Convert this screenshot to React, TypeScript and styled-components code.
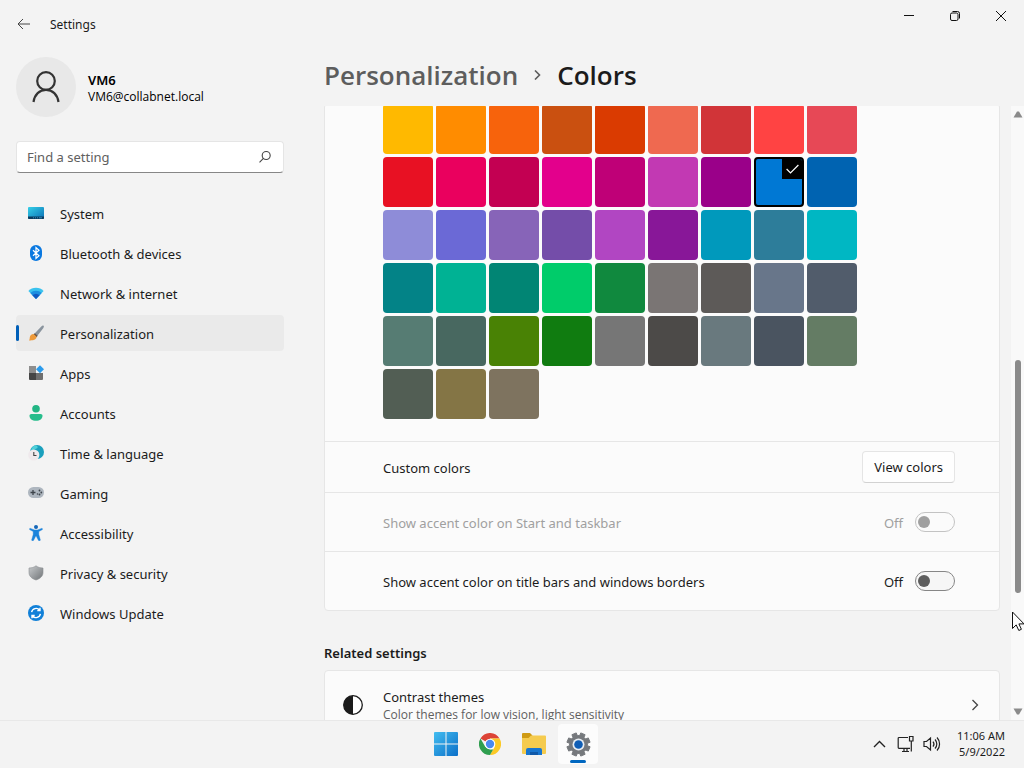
import React, { useState } from "react";
import styled, { createGlobalStyle, css } from "styled-components";

const GlobalStyle = createGlobalStyle`
  * { box-sizing: border-box; }
  body {
    margin: 0;
    background: #f3f3f3;
    color: #1b1b1b;
    font-family: "Noto Sans", "Open Sans", sans-serif;
    font-size: 13px;
    line-height: 20px;
  }
  button, input { font: inherit; color: inherit; }
`;

const Desktop = styled.div`
  display: flex;
  flex-direction: column;
  height: 100vh;
  overflow: hidden;
`;

const Window = styled.div`
  position: relative;
  display: flex;
  flex-direction: column;
  flex: 1;
  min-height: 0;
`;

const TitleBar = styled.header`
  display: flex;
  justify-content: space-between;
  align-items: flex-start;
  height: 48px;
  padding-left: 8px;
`;

const TitleGroup = styled.div`
  display: flex;
  align-items: center;
  gap: 10px;
  height: 48px;
`;

const IconButton = styled.button<{ $width: number }>`
  display: grid;
  place-items: center;
  width: ${(p) => p.$width}px;
  height: 32px;
  padding: 0;
  border: 0;
  background: transparent;
`;

const WindowTitle = styled.span`
  padding-top: 2px;
  font-size: 12px;
`;

const Controls = styled.div`
  display: flex;
`;

const Body = styled.div`
  display: flex;
  flex: 1;
  min-height: 0;
`;

const Sidebar = styled.aside`
  flex: none;
  width: 300px;
  padding: 9px 16px 0;
`;

const Account = styled.div`
  display: flex;
  align-items: center;
  gap: 12px;
`;

const Avatar = styled.div`
  display: grid;
  place-items: center;
  width: 60px;
  height: 60px;
  border-radius: 50%;
  background: #e8e8e8;
`;

const AccountName = styled.div`
  padding-top: 2px;
  font-weight: 600;
  line-height: 18px;
  color: #000;
`;

const AccountMail = styled.div`
  font-family: "Open Sans", "Noto Sans", sans-serif;
  font-size: 12px;
  line-height: 16px;
  color: #000;
`;

const SearchBox = styled.label`
  display: flex;
  align-items: center;
  width: 268px;
  height: 32px;
  margin: 24px 0 22px;
  padding: 0 11px 0 10px;
  border: 1px solid #e5e5e5;
  border-bottom-color: #868686;
  border-radius: 4px;
  background: #fff;
`;

const SearchInput = styled.input`
  flex: 1;
  min-width: 0;
  padding: 0;
  border: 0;
  outline: 0;
  background: transparent;
  &::placeholder { color: #606060; opacity: 1; }
`;

const Nav = styled.nav`
  display: flex;
  flex-direction: column;
  gap: 4px;
`;

const NavLink = styled.a<{ $active: boolean }>`
  position: relative;
  display: flex;
  align-items: center;
  gap: 16px;
  height: 36px;
  width: 268px;
  padding-left: 12px;
  border-radius: 4px;
  color: #1b1b1b;
  text-decoration: none;
  ${(p) =>
    p.$active &&
    css`
      background: #eaeaea;
      &::before {
        content: "";
        position: absolute;
        left: 0;
        top: 10px;
        width: 3px;
        height: 16px;
        border-radius: 2px;
        background: #005fb8;
      }
    `}
`;

const ItemText = styled.span`
  padding-top: 2px;
`;

const Main = styled.main`
  display: flex;
  flex-direction: column;
  flex: 1;
  min-width: 0;
  padding-left: 24px;
`;

const Crumbs = styled.h1`
  display: flex;
  align-items: center;
  gap: 16px;
  height: 58px;
  margin: 0;
  font-family: "Open Sans", "Noto Sans", sans-serif;
  font-size: 26px;
  line-height: 56px;
  padding-bottom: 4px;
  font-weight: 600;
`;

const CrumbLink = styled.a`
  color: #5d5d5d;
  text-decoration: none;
`;

const ScrollView = styled.div`
  display: flex;
  flex: 1;
  min-height: 0;
  overflow: hidden;
`;

const Content = styled.div`
  flex: 1;
  min-width: 0;
  margin: -3px 11px 0 0;
`;

const Card = styled.section`
  border: 1px solid #e6e6e6;
  border-radius: 4px;
  background: #fbfbfb;
`;

const Swatches = styled.div`
  display: grid;
  grid-template-columns: repeat(9, 50px);
  gap: 3px;
  padding: 0 58px 22px;
`;

const Swatch = styled.label<{ $color: string; $checked: boolean }>`
  position: relative;
  display: flex;
  height: 50px;
  border-radius: 4px;
  overflow: hidden;
  background: ${(p) => p.$color};
  border: ${(p) => (p.$checked ? "2px solid #000" : "0")};
`;

const SwatchInput = styled.input`
  appearance: none;
  flex: 1;
  margin: 0;
`;

const SwatchMark = styled.span`
  position: absolute;
  top: 0;
  right: 0;
  display: grid;
  place-items: center;
  width: 20px;
  height: 20px;
  background: #000;
`;

const Row = styled.div<{ $height: number; $muted?: boolean }>`
  display: flex;
  align-items: center;
  justify-content: space-between;
  height: ${(p) => p.$height}px;
  padding: 0 44px 0 58px;
  border-top: 1px solid #e6e6e6;
  color: ${(p) => (p.$muted ? "#a0a0a0" : "#1b1b1b")};
`;

const PlainButton = styled.button`
  height: 32px;
  padding: 0 11px;
  border: 1px solid #e5e5e5;
  border-bottom-color: #d2d2d2;
  border-radius: 4px;
  background: #fefefe;
`;

const SwitchGroup = styled.div`
  display: flex;
  align-items: center;
  gap: 12px;
`;

const Switch = styled.input`
  appearance: none;
  display: flex;
  align-items: center;
  width: 40px;
  height: 20px;
  margin: 0;
  padding: 0 2px;
  border: 1px solid #868686;
  border-radius: 10px;
  background: #f6f6f6;
  &::before {
    content: "";
    width: 12px;
    height: 12px;
    border-radius: 50%;
    background: #5d5d5d;
  }
  &:checked { justify-content: flex-end; }
  &:disabled { border-color: #c3c3c3; background: #fbfbfb; }
  &:disabled::before { background: #a0a0a0; }
`;

const SectionTitle = styled.h2`
  margin: 32px 0 7px;
  font-size: 13px;
  line-height: 20px;
  font-weight: 600;
`;

const LinkRow = styled.a`
  display: flex;
  align-items: center;
  gap: 20px;
  height: 68px;
  padding: 0 20px 0 18px;
  color: #1b1b1b;
  text-decoration: none;
`;

const LinkText = styled.span`
  display: flex;
  flex-direction: column;
  flex: 1;
`;

const Hint = styled.span`
  font-family: "Open Sans", "Noto Sans", sans-serif;
  font-size: 12px;
  line-height: 16px;
  color: #606060;
`;

const ScrollBar = styled.div`
  display: flex;
  flex-direction: column;
  align-items: center;
  flex: none;
  width: 13px;
  background: #f9f9f9;
`;

const ScrollTrack = styled.div`
  display: flex;
  flex-direction: column;
  flex: 1;
`;

const ScrollThumb = styled.div`
  width: 6px;
  flex: 234;
  border-radius: 3px;
  background: #8b8b8b;
`;

const ScrollSpace = styled.div<{ $share: number }>`
  flex: ${(p) => p.$share};
`;

const Pointer = styled.svg`
  position: absolute;
  right: 0;
  top: 611px;
`;

const Taskbar = styled.footer`
  display: grid;
  grid-template-columns: 1fr auto 1fr;
  align-items: center;
  height: 48px;
  box-shadow: inset 0 1px #e8e8e8;
  background: #f3f3f3;
`;

const Pinned = styled.div`
  grid-column: 2;
  display: flex;
  gap: 4px;
`;

const TaskButton = styled.button<{ $active?: boolean }>`
  position: relative;
  display: grid;
  place-items: center;
  width: 40px;
  height: 40px;
  padding: 0;
  border: 0;
  border-radius: 4px;
  background: ${(p) => (p.$active ? "#fcfcfc" : "transparent")};
  ${(p) =>
    p.$active &&
    css`
      &::after {
        content: "";
        position: absolute;
        left: 12px;
        bottom: 1px;
        width: 16px;
        height: 3px;
        border-radius: 2px;
        background: #0067c0;
      }
    `}
`;

const Tray = styled.div`
  justify-self: end;
  display: flex;
  align-items: center;
  gap: 8px;
  padding-right: 19px;
`;

const Clock = styled.time`
  margin-left: 8px;
  text-align: right;
  font-size: 11px;
  line-height: 16px;
`;

const palette = [
  "#ffb900", "#ff8c00", "#f7630c", "#ca5010", "#da3b01", "#ef6950", "#d13438", "#ff4343", "#e74856",
  "#e81123", "#ea005e", "#c30052", "#e3008c", "#bf0077", "#c239b3", "#9a0089", "#0078d4", "#0063b1",
  "#8e8cd8", "#6b69d6", "#8764b8", "#744da9", "#b146c2", "#881798", "#0099bc", "#2d7d9a", "#00b7c3",
  "#038387", "#00b294", "#018574", "#00cc6a", "#10893e", "#7a7574", "#5d5a58", "#68768a", "#515c6b",
  "#567c73", "#486860", "#498205", "#107c10", "#767676", "#4c4a48", "#69797e", "#4a5460", "#647c64",
  "#525e54", "#847545", "#7e735f",
];

const navIcons: Record<string, React.ReactNode> = {
  System: (
    <>
      <defs><linearGradient id="sys" x1="0" y1="0" x2="1" y2="1"><stop stopColor="#35d0e8" /><stop offset="1" stopColor="#0a6fb5" /></linearGradient></defs>
      <rect y="2" width="16" height="12" rx="1" fill="url(#sys)" />
      <path d="M0 11.500h16V13a1 1 0 0 1-1 1H1a1 1 0 0 1-1-1z" fill="#0b3a5e" />
      <path d="M5 12.800h1M7 12.800h1M9 12.800h1M11 12.800h3" stroke="#3aa6d8" strokeWidth=".8" />
    </>
  ),
  "Bluetooth & devices": (
    <>
      <rect x="2" width="12" height="16" rx="6" fill="#0a78e0" />
      <path d="M5 5.200l6 5.600-3 2.600V2.600l3 2.600-6 5.600" fill="none" stroke="#fff" strokeWidth="1.200" />
    </>
  ),
  "Network & internet": (
    <>
      <path d="M8 14L.4 6C2.400 4 5 2.800 8 2.800S13.600 4 15.600 6z" fill="#39c2ee" />
      <path d="M8 14L2.300 8a8.300 8.300 0 0 1 11.400 0z" fill="#1c8fe0" />
      <path d="M8 14L4.400 10.200a5.500 5.500 0 0 1 7.200 0z" fill="#1059c0" />
    </>
  ),
  Personalization: (
    <>
      <path d="M15.600.8c.7.7.2 1.600-.4 2.500L9.200 11 6.600 8.600l6.700-7C14.100.7 15 .2 15.600.8z" fill="#8a949e" />
      <path d="M6.800 8.200l2.800 2.600-1 1.400-3.100-2.900z" fill="#6a5340" />
      <path d="M5.500 8.900l3 2.900c.1 2.400-2.300 3.900-7.500 3.600C2 14.300 1.500 13 2 11.500c.5-1.600 1.900-2.700 3.500-2.600z" fill="#ee9a3a" />
    </>
  ),
  Apps: (
    <>
      <path d="M1 1h7v7H1z" fill="#8e8e8e" />
      <path d="M1 8h7v7H2a1 1 0 0 1-1-1z" fill="#454545" />
      <path d="M8 8h7v6a1 1 0 0 1-1 1H8z" fill="#6f6f6f" />
      <path d="M12 .2l4 4-4 4-4-4z" fill="#2a9bec" />
    </>
  ),
  Accounts: (
    <>
      <circle cx="8" cy="3.800" r="3.800" fill="#22b584" />
      <path d="M3.300 9h9.400c1 0 1.800.8 1.800 1.800 0 3-2.700 5-6.500 5s-6.500-2-6.500-5C1.500 9.800 2.300 9 3.300 9z" fill="#27bd8c" />
    </>
  ),
  "Time & language": (
    <>
      <circle cx="9" cy="7" r="7" fill="#1aa0bd" />
      <path d="M7 .4c3 0 3.500 2 1.500 3.200S5 5 3 6c.3-3 1.700-5 4-5.600z" fill="#4fd0d8" />
      <circle cx="5.800" cy="10" r="5.600" fill="#efe9ec" />
      <path d="M5.800 7v3.500h2.700" fill="none" stroke="#444" strokeWidth="1.100" />
    </>
  ),
  Gaming: (
    <>
      <rect y="2" width="16" height="11" rx="5.500" fill="#aeb6bf" />
      <path d="M2.500 7.500h5M5 5v5" stroke="#3e444b" strokeWidth="1.300" />
      <circle cx="9.500" cy="9" r=".8" fill="#3e444b" /><circle cx="11.500" cy="5.500" r=".9" fill="#3e444b" />
      <circle cx="13.300" cy="7.500" r=".9" fill="#3e444b" /><circle cx="11.500" cy="9.500" r=".9" fill="#3e444b" />
    </>
  ),
  Accessibility: (
    <>
      <circle cx="8" cy="2" r="2" fill="#1667b8" />
      <path d="M2.500 3.400l4 1.500h3l4-1.500c1-.3 1.400 1 .6 1.400L10.800 6.500v3l1.500 5.300c.2 1-1.400 1.500-1.900.5L8.200 11h-.4l-2.200 4.300c-.5 1-2.100.5-1.900-.5L5.200 9.500v-3L1.900 4.800c-.8-.4-.4-1.700.6-1.400z" fill="#1b84dc" stroke="#1b84dc" strokeWidth=".4" />
    </>
  ),
  "Privacy & security": (
    <>
      <defs><linearGradient id="shield" x1="0" y1="0" x2="1" y2="1"><stop stopColor="#c8cbcd" /><stop offset="1" stopColor="#6f7376" /></linearGradient></defs>
      <path d="M8 .8c2 1.500 4.200 2.200 7 2.200v4.500c0 3.500-2.500 6-7 7.500-4.500-1.500-7-4-7-7.500V3C3.800 3 6 2.300 8 .8z" fill="url(#shield)" stroke="#8b8f92" strokeWidth=".6" />
    </>
  ),
  "Windows Update": (
    <>
      <circle cx="8" cy="8" r="8" fill="#1180d8" />
      <path d="M3.600 7.200a4.600 4.600 0 0 1 8-2.200M12.400 8.800a4.600 4.600 0 0 1-8 2.200M12 2.800v2.700H9.300M4 13.200v-2.700h2.700" fill="none" stroke="#fff" strokeWidth="1.400" />
    </>
  ),
};

const gearPath = (() => {
  const teeth = 8;
  const points: string[] = [];
  for (let i = 0; i < teeth; i++) {
    const a = ((i + 0.5) / teeth) * Math.PI * 2;
    [[-0.26, 9], [-0.2, 11.8], [0.2, 11.8], [0.26, 9]].forEach(([d, r]) =>
      points.push(`${(12.5 + Math.cos(a + d) * r).toFixed(2)} ${(12.5 + Math.sin(a + d) * r).toFixed(2)}`)
    );
  }
  return `M${points.join("L")}Z`;
})();

function SwitchRow({ id, label, disabled }: { id: string; label: string; disabled?: boolean }) {
  const [on, setOn] = useState(false);
  return (
    <Row $height={59} $muted={disabled}>
      <ItemText as="label" htmlFor={id}>{label}</ItemText>
      <SwitchGroup>
        <ItemText>{on ? "On" : "Off"}</ItemText>
        <Switch id={id} type="checkbox" role="switch" disabled={disabled} checked={on} onChange={() => setOn(!on)} />
      </SwitchGroup>
    </Row>
  );
}

export default function App() {
  const [accent, setAccent] = useState("#0078d4");
  const [query, setQuery] = useState("");
  return (
    <Desktop>
      <GlobalStyle />
      <Window>
        <TitleBar>
          <TitleGroup>
            <IconButton $width={32} aria-label="Back">
              <svg width="14" height="12" viewBox="0 0 14 12" fill="none" stroke="#444"><path d="M13 6H1M6 1L1 6l5 5" /></svg>
            </IconButton>
            <WindowTitle>Settings</WindowTitle>
          </TitleGroup>
          <Controls>
            <IconButton $width={46} aria-label="Minimize">
              <svg width="10" height="10" stroke="#111"><path d="M0 4.500h10" /></svg>
            </IconButton>
            <IconButton $width={46} aria-label="Restore">
              <svg width="10" height="10" viewBox="0 0 10 10" fill="none" stroke="#111"><rect x=".5" y="2" width="7.500" height="7.500" rx="1.500" /><path d="M2.500.5h5a2 2 0 0 1 2 2v5" /></svg>
            </IconButton>
            <IconButton $width={46} aria-label="Close">
              <svg width="10" height="10" viewBox="0 0 10 10" stroke="#111"><path d="M0 0l10 10M10 0L0 10" /></svg>
            </IconButton>
          </Controls>
        </TitleBar>
        <Body>
          <Sidebar>
            <Account>
              <Avatar>
                <svg width="28" height="32" viewBox="0 0 28 32" fill="none" stroke="#333" strokeWidth="2.200">
                  <circle cx="14" cy="10" r="8.800" /><path d="M1.500 31c1-7.500 6-12.200 12.500-12.200S25.500 23.500 26.500 31" />
                </svg>
              </Avatar>
              <div>
                <AccountName>VM6</AccountName>
                <AccountMail>VM6@collabnet.local</AccountMail>
              </div>
            </Account>
            <SearchBox>
              <SearchInput aria-label="Find a setting" placeholder="Find a setting" value={query} onChange={(e) => setQuery(e.target.value)} />
              <svg width="14" height="14" viewBox="0 0 14 14" fill="none" stroke="#444" strokeWidth="1.100"><circle cx="8.200" cy="5.500" r="4" /><path d="M5.400 8.400L1.500 12.300" /></svg>
            </SearchBox>
            <Nav>
              {Object.keys(navIcons).map((name) => (
                <NavLink key={name} href="#" $active={name === "Personalization"}>
                  <svg width="16" height="16" viewBox="0 0 16 16">{navIcons[name]}</svg>
                  <ItemText>{name}</ItemText>
                </NavLink>
              ))}
            </Nav>
          </Sidebar>
          <Main>
            <Crumbs>
              <CrumbLink href="#">Personalization</CrumbLink>
              <svg width="7" height="10" viewBox="0 0 7 10" fill="none" stroke="#5d5d5d" strokeWidth="1.600"><path d="M1 .5L5.500 5 1 9.500" /></svg>
              <span>Colors</span>
            </Crumbs>
            <ScrollView>
              <Content>
                <Card>
                  <Swatches role="radiogroup" aria-label="Windows colors">
                    {palette.map((color) => (
                      <Swatch key={color} $color={color} $checked={color === accent}>
                        <SwatchInput type="radio" name="accent" aria-label={color} checked={color === accent} onChange={() => setAccent(color)} />
                        {color === accent && (
                          <SwatchMark>
                            <svg width="13" height="10" viewBox="0 0 13 10" fill="none" stroke="#fff" strokeWidth="1.200"><path d="M.6 5l3.900 4L12.400 1" /></svg>
                          </SwatchMark>
                        )}
                      </Swatch>
                    ))}
                  </Swatches>
                  <Row $height={51}>
                    <ItemText>Custom colors</ItemText>
                    <PlainButton>View colors</PlainButton>
                  </Row>
                  <SwitchRow id="accent-start" label="Show accent color on Start and taskbar" disabled />
                  <SwitchRow id="accent-title" label="Show accent color on title bars and windows borders" />
                </Card>
                <SectionTitle>Related settings</SectionTitle>
                <Card>
                  <LinkRow href="#">
                    <svg width="20" height="20" viewBox="0 0 20 20"><circle cx="10" cy="10" r="9.300" fill="#fff" stroke="#1b1b1b" strokeWidth="1.300" /><path d="M10 .7a9.300 9.300 0 0 0 0 18.600z" fill="#1b1b1b" /></svg>
                    <LinkText>
                      <span>Contrast themes</span>
                      <Hint>Color themes for low vision, light sensitivity</Hint>
                    </LinkText>
                    <svg width="8" height="12" viewBox="0 0 8 12" fill="none" stroke="#444" strokeWidth="1.300"><path d="M1.500 1l5 5-5 5" /></svg>
                  </LinkRow>
                </Card>
              </Content>
              <ScrollBar>
                <svg width="13" height="16"><path d="M2.500 11.500h9L8 5.500H6z" fill="#8b8b8b" /></svg>
                <ScrollTrack>
                  <ScrollSpace $share={238} />
                  <ScrollThumb />
                  <ScrollSpace $share={111} />
                </ScrollTrack>
                <svg width="13" height="16"><path d="M2.500 4.500h9L8 10.500H6z" fill="#8b8b8b" /></svg>
              </ScrollBar>
            </ScrollView>
          </Main>
        </Body>
        <Pointer width="12" height="20" viewBox="0 0 12 20"><path d="M.5 1v16.500l3.700-3.600 2.600 5.600 2.600-1.200-2.500-5.400H12z" fill="#fff" stroke="#111" /></Pointer>
      </Window>
      <Taskbar>
        <Pinned>
          <TaskButton aria-label="Start">
            <svg width="24" height="24" viewBox="0 0 24 24">
              <defs><linearGradient id="win" x1="0" y1="0" x2="1" y2="1"><stop stopColor="#42bdf0" /><stop offset="1" stopColor="#0c6fc8" /></linearGradient></defs>
              <path d="M1 0h10.500v11.500H0V1a1 1 0 0 1 1-1zM12.500 0H23a1 1 0 0 1 1 1v10.500H12.500zM0 12.500h11.500V24H1a1 1 0 0 1-1-1zM12.500 12.500H24V23a1 1 0 0 1-1 1H12.500z" fill="url(#win)" />
            </svg>
          </TaskButton>
          <TaskButton aria-label="Chrome">
            <svg width="22" height="22" viewBox="0 0 22 22">
              <path d="M11 11L1.470 5.500A11 11 0 0 1 20.530 5.500H11z" fill="#dc4436" />
              <path d="M11 5.500h9.530A11 11 0 0 1 11 22l4.760-8.250z" fill="#fbc926" />
              <path d="M1.470 5.500l4.770 8.250L11 16.500h3.170L11 22A11 11 0 0 1 1.470 5.500z" fill="#2f9e4f" />
              <circle cx="11" cy="11" r="5.300" fill="#fff" /><circle cx="11" cy="11" r="4.200" fill="#4a8af0" />
            </svg>
          </TaskButton>
          <TaskButton aria-label="File Explorer">
            <svg width="24" height="22" viewBox="0 0 24 22">
              <path d="M1 0h7l2.500 2.500L8 6H0V1a1 1 0 0 1 1-1z" fill="#cf9a13" />
              <path d="M9 2.500h14a1 1 0 0 1 1 1V20a1 1 0 0 1-1 1H1a1 1 0 0 1-1-1V5h6.500z" fill="#f5cb4e" />
              <path d="M4 22v-5a2 2 0 0 1 2-2h12a2 2 0 0 1 2 2v5z" fill="#1775cf" /><path d="M8 19h8v3H8z" fill="#0f58a8" />
            </svg>
          </TaskButton>
          <TaskButton $active aria-label="Settings">
            <svg width="25" height="25" viewBox="0 0 25 25">
              <path d={gearPath} fill="#76797d" stroke="#76797d" strokeWidth="1" strokeLinejoin="round" />
              <circle cx="12.500" cy="12.500" r="6" fill="#e8edf2" /><circle cx="12.500" cy="12.500" r="4.300" fill="#0f5db5" />
            </svg>
          </TaskButton>
        </Pinned>
        <Tray>
          <IconButton $width={20} aria-label="Show hidden icons">
            <svg width="13" height="8" viewBox="0 0 13 8" fill="none" stroke="#222" strokeWidth="1.400"><path d="M1 7l5.500-5.500L12 7" /></svg>
          </IconButton>
          <svg width="18" height="18" viewBox="0 0 18 18" fill="none" stroke="#222" strokeWidth="1.200">
            <path d="M11 2.500H2a.8.8 0 0 0-.8.800V12.500a.8.8 0 0 0 .8.800h11M5 16.500h7M7 13.500v3M10 13.500v3M12.500 1.500h3.500v4.500h-3.500zM14.300 6v10.500" />
          </svg>
          <svg width="18" height="16" viewBox="0 0 18 16" fill="none" stroke="#222" strokeWidth="1.200">
            <path d="M1 5.500h2.500l4-3.500v12l-4-3.500H1zM10 5.500a4 4 0 0 1 0 5M12 3.500a6.500 6.500 0 0 1 0 9M14 1.500a9.500 9.500 0 0 1 0 13" />
          </svg>
          <Clock dateTime="2022-05-09T11:06">
            11:06 AM
            <br />
            5/9/2022
          </Clock>
        </Tray>
      </Taskbar>
    </Desktop>
  );
}
